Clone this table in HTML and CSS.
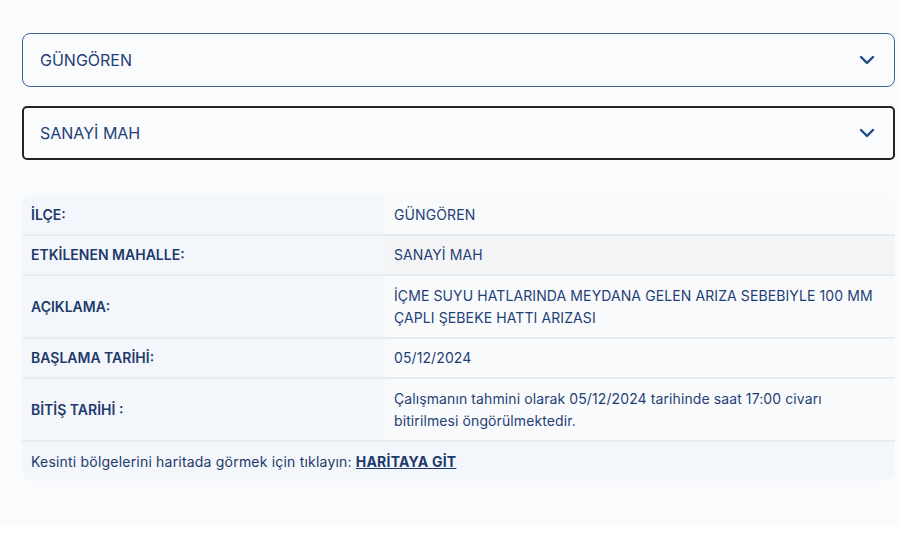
FILE: index.html
```html
<!DOCTYPE html>
<html lang="tr">
<head>
<meta charset="utf-8">
<link rel="stylesheet" href="styles.css">
</head>
<body>
<div class="page">
  <div class="select select-blue">
    <span>GÜNGÖREN</span>
    <svg class="chev" width="16" height="10" viewBox="0 0 16 10"><path d="M2 2 L8 8 L14 2" fill="none" stroke="#1f4a86" stroke-width="2.4" stroke-linecap="round" stroke-linejoin="round"/></svg>
  </div>
  <div class="select select-dark">
    <span>SANAYİ MAH</span>
    <svg class="chev" width="16" height="10" viewBox="0 0 16 10"><path d="M2 2 L8 8 L14 2" fill="none" stroke="#1f4a86" stroke-width="2.4" stroke-linecap="round" stroke-linejoin="round"/></svg>
  </div>
  <div class="card">
    <table class="info">
      <tr><th>İLÇE:</th><td>GÜNGÖREN</td></tr>
      <tr class="alt"><th>ETKİLENEN MAHALLE:</th><td>SANAYİ MAH</td></tr>
      <tr class="tall"><th>AÇIKLAMA:</th><td>İÇME SUYU HATLARINDA MEYDANA GELEN ARIZA SEBEBIYLE 100 MM ÇAPLI ŞEBEKE HATTI ARIZASI</td></tr>
      <tr><th>BAŞLAMA TARİHİ:</th><td>05/12/2024</td></tr>
      <tr class="tall"><th>BİTİŞ TARİHİ :</th><td>Çalışmanın tahmini olarak 05/12/2024 tarihinde saat 17:00 civarı bitirilmesi öngörülmektedir.</td></tr>
    </table>
    <div class="foot">Kesinti bölgelerini haritada görmek için tıklayın: <a href="#">HARİTAYA GİT</a></div>
  </div>
</div>
</body>
</html>
```
FILE: styles.css
```css
html, body {
  margin: 0;
  background: #ffffff;
}
body {
  font-family: Inter, "Noto Sans", sans-serif;
  color: #1e3a6c;
}
.page {
  background: #f9fbfd;
  padding: 33px 5px 44px 22px;
}
.select {
  box-sizing: border-box;
  height: 54px;
  display: flex;
  align-items: center;
  justify-content: space-between;
  padding: 0 19px 0 17px;
  border-radius: 8px;
  font-size: 16px;
  color: #1f3f76;
  background: #f9fbfd;
}
.select-blue {
  border: 1px solid #3b62a3;
  margin-bottom: 19px;
}
.select-dark {
  border: 2px solid #232323;
  padding-left: 16px;
  padding-right: 18px;
  border-radius: 5px;
}
.chev {
  display: block;
}
.card {
  margin-top: 35px;
  background: #f3f6fa;
  border-radius: 10px;
  overflow: hidden;
}
.info {
  width: 100%;
  border-collapse: collapse;
  font-size: 14px;
}
.info th, .info td {
  height: 40px;
  box-sizing: border-box;
  padding: 0 9px;
  text-align: left;
  vertical-align: middle;
  border-bottom: 2px solid #e9ecef;
  line-height: 22px;
}
.info th {
  width: 363px;
  font-weight: 600;
  background: #f3f6fa;
  color: #1e3a6c;
}
.info td {
  background: #f9fafc;
  font-weight: 400;
  color: #1f3f76;
  letter-spacing: 0.1px;
}
.info tr.alt td {
  background: #f3f4f6;
}
.info tr.tall th, .info tr.tall td {
  height: 63px;
}
.foot {
  height: 39px;
  display: flex;
  align-items: center;
  padding: 0 9px;
  font-size: 14px;
  color: #1e3a6c;
  letter-spacing: 0.2px;
}
.foot a {
  color: #1e3a6c;
  font-weight: 700;
  text-decoration: underline;
  margin-left: 4px;
}
```
